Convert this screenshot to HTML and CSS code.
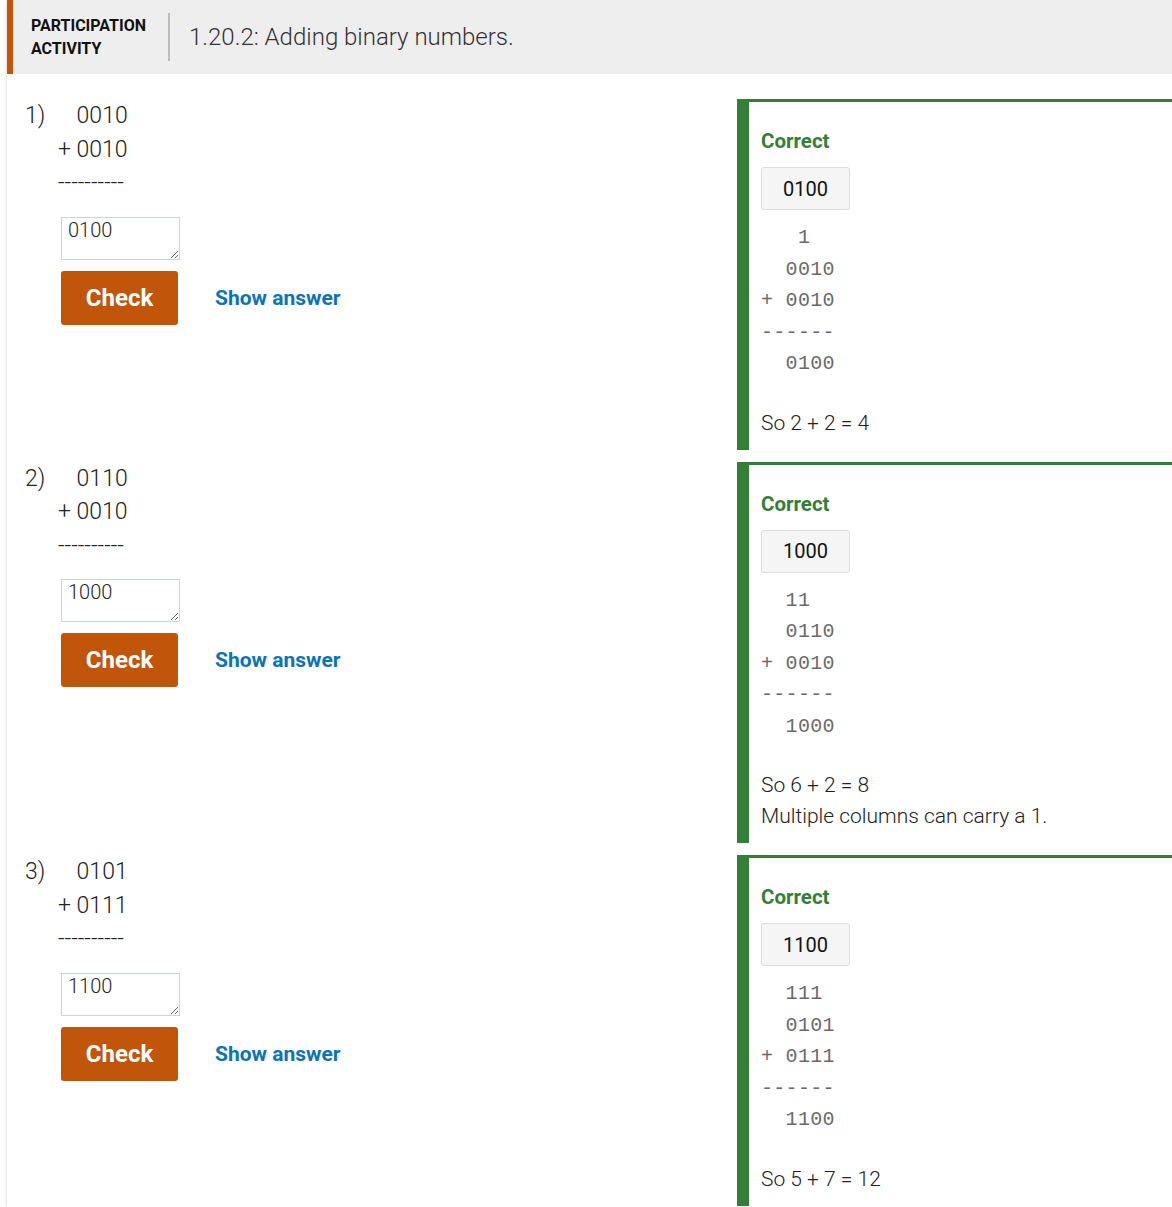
FILE: index.html
```html
<!DOCTYPE html>
<html>
<head>
<meta charset="utf-8">
<link rel="stylesheet" href="styles.css">
</head>
<body>
<div class="activity">
  <div class="header">
    <div class="label">PARTICIPATION<br>ACTIVITY</div>
    <div class="divider"></div>
    <div class="title">1.20.2: Adding binary numbers.</div>
  </div>
  <div class="questions">
    <div class="row">
      <div class="question">
        <div class="qnum">1)</div>
        <div class="qbody">
          <div class="line"><span class="ghost">+ </span>0010</div>
          <div class="line">+ 0010</div>
          <div class="line">----------</div>
          <textarea class="answer" rows="1">0100</textarea>
          <div class="actions">
            <button class="check">Check</button>
            <span class="show">Show answer</span>
          </div>
        </div>
      </div>
      <div class="feedback">
        <div class="correct">Correct</div>
        <div class="given">0100</div>
        <pre class="work">   1
  0010
+ 0010
------
  0100</pre>
        <div class="explain">So 2 + 2 = 4</div>
      </div>
    </div>
    <div class="row">
      <div class="question">
        <div class="qnum">2)</div>
        <div class="qbody">
          <div class="line"><span class="ghost">+ </span>0110</div>
          <div class="line">+ 0010</div>
          <div class="line">----------</div>
          <textarea class="answer" rows="1">1000</textarea>
          <div class="actions">
            <button class="check">Check</button>
            <span class="show">Show answer</span>
          </div>
        </div>
      </div>
      <div class="feedback">
        <div class="correct">Correct</div>
        <div class="given">1000</div>
        <pre class="work">  11
  0110
+ 0010
------
  1000</pre>
        <div class="explain">So 6 + 2 = 8<br>Multiple columns can carry a 1.</div>
      </div>
    </div>
    <div class="row">
      <div class="question">
        <div class="qnum">3)</div>
        <div class="qbody">
          <div class="line"><span class="ghost">+ </span>0101</div>
          <div class="line">+ 0111</div>
          <div class="line">----------</div>
          <textarea class="answer" rows="1">1100</textarea>
          <div class="actions">
            <button class="check">Check</button>
            <span class="show">Show answer</span>
          </div>
        </div>
      </div>
      <div class="feedback">
        <div class="correct">Correct</div>
        <div class="given">1100</div>
        <pre class="work">  111
  0101
+ 0111
------
  1100</pre>
        <div class="explain">So 5 + 7 = 12</div>
      </div>
    </div>
  </div>
</div>
</body>
</html>
```

FILE: styles.css
```css
html, body {
  margin: 0;
  padding: 0;
  background: #fff;
  overflow: hidden;
}
body {
  font-family: Roboto, "Liberation Sans", sans-serif;
  color: #222;
}
.activity {
  margin-left: 7px;
  min-height: 1207px;
  background: #fff;
  box-shadow: 0 0 4px rgba(0, 0, 0, 0.18);
}
.header {
  height: 74px;
  box-sizing: border-box;
  background: #eeeeee;
  border-left: 6px solid #c1550a;
  display: flex;
  align-items: center;
  padding-left: 18px;
}
.label {
  font-weight: 700;
  font-size: 16px;
  line-height: 23px;
  color: #111;
  width: 137px;
  margin-top: -1px;
}
.divider {
  width: 2px;
  height: 48px;
  background: #bdbdbd;
  margin-right: 19px;
}
.title {
  font-size: 24px;
  font-weight: 300;
  color: #333;
  margin-top: -1px;
}
.questions {
  display: flex;
  flex-direction: column;
  gap: 12px;
  padding-top: 25px;
}
.row {
  display: flex;
}
.question {
  width: 712px;
  padding-left: 18px;
  display: flex;
}
.qnum {
  width: 33px;
  font-size: 23px;
  font-weight: 300;
  line-height: 33.5px;
}
.qbody {
  display: flex;
  flex-direction: column;
  align-items: flex-start;
}
.line {
  font-size: 23px;
  font-weight: 300;
  line-height: 33.5px;
  white-space: pre;
}
.ghost {
  visibility: hidden;
}
.answer {
  margin: 17px 0 0 3px;
  width: 119px;
  height: 43px;
  box-sizing: border-box;
  border: 1px solid #ccd4d9;
  border-radius: 0;
  padding: 1px 6px;
  font-family: Roboto, "Liberation Sans", sans-serif;
  font-size: 20px;
  font-weight: 300;
  color: #222;
  line-height: 23px;
  outline: none;
}
.actions {
  display: flex;
  align-items: center;
  margin: 11px 0 0 3px;
  gap: 37px;
}
.check {
  width: 117px;
  height: 54px;
  border: none;
  border-radius: 3px;
  background: #c1550a;
  color: #fff;
  font-family: Roboto, "Liberation Sans", sans-serif;
  font-size: 24px;
  font-weight: 700;
  padding: 0;
}
.show {
  color: #0b74b8;
  font-size: 21px;
  font-weight: 700;
}
.feedback {
  flex: 1;
  border-top: 3px solid #347f38;
  border-left: 12px solid #347f38;
  padding: 24px 12px 11px 12px;
  display: flex;
  flex-direction: column;
  align-items: flex-start;
}
.correct {
  color: #347f38;
  font-size: 20.5px;
  font-weight: 700;
  line-height: 30px;
}
.given {
  margin-top: 11px;
  width: 89px;
  height: 43px;
  box-sizing: border-box;
  background: #f5f5f5;
  border: 1px solid #dddddd;
  border-radius: 3px;
  display: flex;
  align-items: center;
  justify-content: center;
  font-size: 20px;
  color: #111;
}
.work {
  margin: 12px 0 0 0;
  font-family: "Liberation Mono", monospace;
  font-size: 20px;
  letter-spacing: 0.3px;
  line-height: 31.5px;
  color: #6a6a6a;
}
.explain {
  margin-top: 28px;
  font-size: 21px;
  font-weight: 300;
  line-height: 31px;
  color: #222;
}
```
